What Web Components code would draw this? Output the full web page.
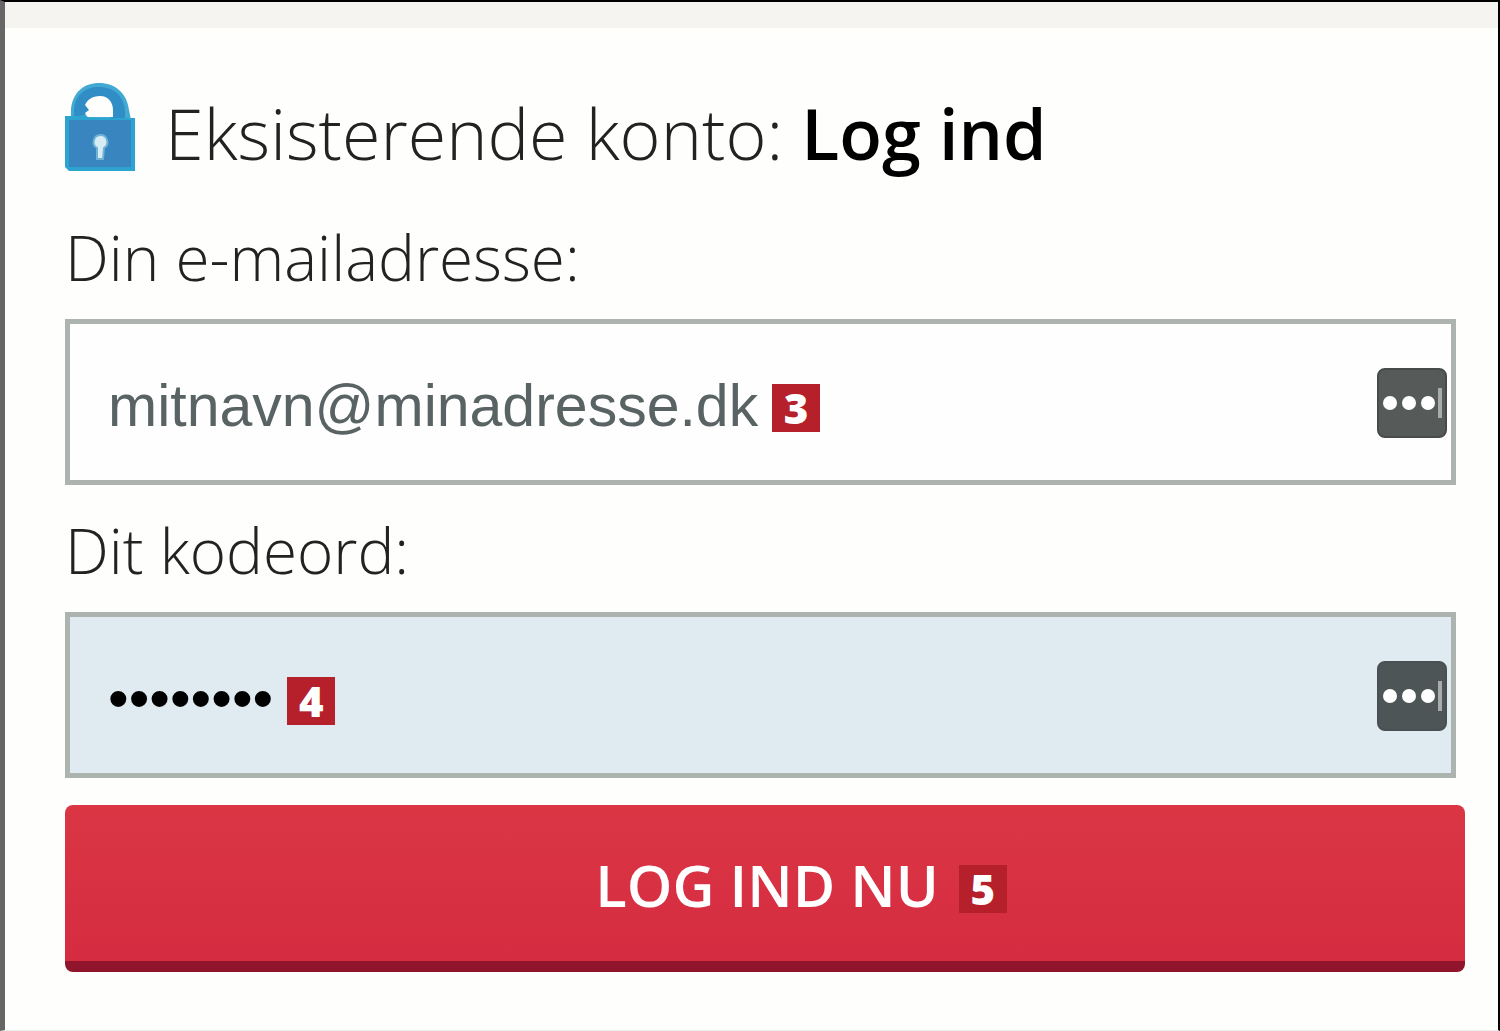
<!DOCTYPE html>
<html lang="da">
<head>
<meta charset="utf-8">
<meta name="viewport" content="width=device-width, initial-scale=1">
<title>Log ind</title>
<style>
  body {
    margin: 0;
    background: #fefefc;
    color: #222;
    font-family: "Open Sans", "Noto Sans", sans-serif;
  }
</style>
</head>
<body>
<login-panel>
  <login-heading slot="title">Eksisterende konto: <b>Log ind</b></login-heading>
  <login-field type="email" label="Din e-mailadresse:" value="mitnavn@minadresse.dk">
    <step-badge>3</step-badge>
  </login-field>
  <login-field type="password" label="Dit kodeord:" value="kodeord1" filled>
    <step-badge>4</step-badge>
  </login-field>
  <login-button slot="action">LOG IND NU<step-badge slot="badge">5</step-badge></login-button>
</login-panel>

<script>
class LoginPanel extends HTMLElement {
  constructor() {
    super();
    this.attachShadow({ mode: "open" });
    this.shadowRoot.innerHTML = `
      <style>
        :host {
          display: block;
          box-sizing: border-box;
          min-height: 100vh;
          border-top: 2px solid #000;
          border-left: 5px solid #666;
          border-right: 2px solid #000;
          border-bottom: 1px solid #eee;
        }

        header {
          height: 26px;
          background: #f5f4f1;
        }

        main {
          padding: 55px 33px 40px 60px;
        }

        #fields {
          margin-right: 9px;
          margin-bottom: 27px;
        }
      </style>
      <header></header>
      <main>
        <slot name="title"></slot>
        <div id="fields"><slot></slot></div>
        <slot name="action"></slot>
      </main>
    `;
  }
}

class LoginHeading extends HTMLElement {
  constructor() {
    super();
    this.attachShadow({ mode: "open" });
    this.shadowRoot.innerHTML = `
      <style>
        :host {
          display: flex;
          align-items: flex-start;
          gap: 30px;
          padding-bottom: 9px;
        }

        svg {
          flex: none;
          width: 70px;
          height: 90px;
        }

        h1 {
          margin: 0;
          font-size: 70px;
          line-height: 100px;
          font-weight: 300;
        }

        ::slotted(b) {
          font-weight: 600;
          color: #000;
        }
      </style>
      <svg viewBox="0 0 70 90" aria-hidden="true">
        <path d="M6 36V26C8 9 19 0 34 0C50 0 62 10 64 27L66 37Z" fill="#41a9d2"/>
        <path d="M9 34V27C10 12 20 4 34 4C49 4 59 13 60 28V38H46V32H20Z" fill="#318dc6"/>
        <path d="M20 22C22 17 27 13 35 13C43 13 48 19 48 27V34H22L20 30L24 27Z" fill="#fefefc"/>
        <path d="M0 33H21L25 35H70V88H4L0 84Z" fill="#2da4d0"/>
        <path d="M4 37H66V84H4Z" fill="#3885c0"/>
        <path d="M35 52a7 7 0 0 1 4 13L38 76H32V65A7 7 0 0 1 35 52Z" fill="#d8edf3" stroke="#70b1d6" stroke-width="2"/>
      </svg>
      <h1><slot></slot></h1>
    `;
  }
}

class LoginField extends HTMLElement {
  constructor() {
    super();
    this.attachShadow({ mode: "open" });
    this.shadowRoot.innerHTML = `
      <style>
        :host {
          display: block;
        }

        label {
          display: block;
          padding: 23px 0 20px;
          font-size: 62px;
          line-height: 84px;
          font-weight: 300;
        }

        #box {
          display: flex;
          align-items: center;
          box-sizing: border-box;
          min-height: 166px;
          padding: 0 4px 0 38px;
          border: 5px solid #adb3ae;
          background: #fefefe;
        }

        :host([filled]) #box {
          background: #e0ebf1;
        }

        input {
          field-sizing: content;
          min-width: 40px;
          margin: 0 14px 0 0;
          padding: 7px 0 0;
          border: 0;
          outline: 0;
          background: none;
          color: #5a6363;
          font: 59px/72px "Liberation Sans", Arial, sans-serif;
        }

        :host([filled]) input {
          color: #000;
        }

        ::slotted(step-badge) {
          margin-top: 11px;
        }

        button {
          flex: none;
          display: block;
          width: 70px;
          height: 70px;
          margin: 2px 0 0 auto;
          padding: 0;
          border: 2px solid #474b49;
          border-radius: 8px;
          background: #565a58;
        }

        :host([filled]) button {
          border-color: #495053;
          background: #4e5557;
        }

        svg {
          display: block;
          width: 100%;
          height: 100%;
        }
      </style>
      <label for="input"></label>
      <div id="box">
        <input id="input">
        <slot></slot>
        <button type="button" aria-label="Udfyld automatisk">
          <svg viewBox="0 0 66 66" aria-hidden="true">
            <g fill="#fff">
              <circle cx="11" cy="33" r="7"/>
              <circle cx="30" cy="33" r="7"/>
              <circle cx="49" cy="33" r="7"/>
            </g>
            <path d="M59 18h4v30h-4z" fill="#a9acab"/>
          </svg>
        </button>
      </div>
    `;
    const input = this.shadowRoot.querySelector("input");
    input.type = this.getAttribute("type");
    input.value = this.getAttribute("value");
    this.shadowRoot.querySelector("label").textContent = this.getAttribute("label");
  }
}

class StepBadge extends HTMLElement {
  constructor() {
    super();
    this.attachShadow({ mode: "open" });
    this.shadowRoot.innerHTML = `
      <style>
        :host {
          display: inline-flex;
          flex: none;
          align-items: center;
          justify-content: center;
          width: 48px;
          height: 48px;
          background: #b5202a;
          color: #fff;
          font: 800 42px/48px "Open Sans", "Noto Sans", sans-serif;
        }
      </style>
      <slot></slot>
    `;
  }
}

class LoginButton extends HTMLElement {
  constructor() {
    super();
    this.attachShadow({ mode: "open" });
    this.shadowRoot.innerHTML = `
      <style>
        :host {
          display: block;
        }

        button {
          display: flex;
          align-items: center;
          justify-content: center;
          gap: 20px;
          box-sizing: border-box;
          width: 100%;
          min-height: 167px;
          padding: 4px 0 0 72px;
          border: 0;
          border-bottom: 11px solid #90142c;
          border-radius: 8px;
          background: linear-gradient(#da3644, #d62c41);
          color: #fff;
          font: 600 58px/80px "Open Sans", "Noto Sans", sans-serif;
        }

        ::slotted(step-badge) {
          margin-top: 8px;
        }
      </style>
      <button type="button">
        <span><slot></slot></span>
        <slot name="badge"></slot>
      </button>
    `;
  }
}

customElements.define("login-panel", LoginPanel);
customElements.define("login-heading", LoginHeading);
customElements.define("login-field", LoginField);
customElements.define("step-badge", StepBadge);
customElements.define("login-button", LoginButton);
</script>
</body>
</html>
